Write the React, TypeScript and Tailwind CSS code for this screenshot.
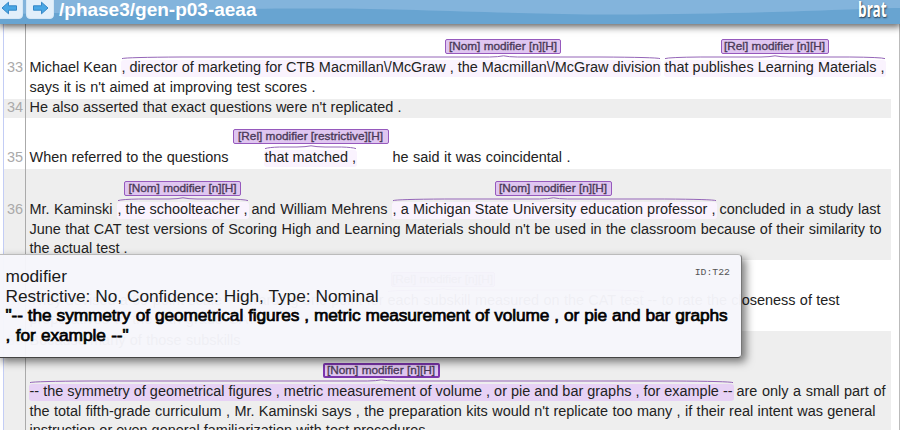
import { clsx } from 'clsx';

type Seg = {
  text: string;
  width: number;
  gap?: number;
  tone?: 'soft' | 'strong';
  label?: string;
  labelX?: number;
  labelWidth?: number;
};

type Sentence = {
  no: string;
  row: string;
  lines: Seg[][];
};

const sentences: Sentence[] = [
  {
    no: '33',
    row: 'h-[74.5px] pt-[34.2px] bg-white',
    lines: [
      [
        { text: 'Michael Kean', width: 87 },
        { text: ', director of marketing for CTB Macmillan\\/McGraw , the Macmillan\\/McGraw division', width: 538, gap: 5, tone: 'soft', label: '[Nom] modifier [n][H]', labelX: 323.5, labelWidth: 116 },
        { text: 'that publishes Learning Materials ,', width: 220, gap: 5, tone: 'soft', label: '[Rel] modifier [n][H]', labelX: 56, labelWidth: 108 },
      ],
      [{ text: "says it is n't aimed at improving test scores .", width: 286 }],
    ],
  },
  {
    no: '34',
    row: 'h-[19.5px] bg-[#eee] leading-[17px]',
    lines: [[{ text: "He also asserted that exact questions were n't replicated .", width: 372 }]],
  },
  {
    no: '35',
    row: 'h-[51px] pt-[30.3px] bg-white',
    lines: [
      [
        { text: 'When referred to the questions', width: 199 },
        { text: 'that matched ,', width: 91, gap: 36, tone: 'soft', label: '[Rel] modifier [restrictive][H]', labelX: -32, labelWidth: 156 },
        { text: 'he said it was coincidental .', width: 178, gap: 37 },
      ],
    ],
  },
  {
    no: '36',
    row: 'h-[90.5px] pt-[31px] bg-[#eee]',
    lines: [
      [
        { text: 'Mr. Kaminski', width: 83 },
        { text: ', the schoolteacher ,', width: 130, gap: 5, tone: 'soft', label: '[Nom] modifier [n][H]', labelX: 6.5, labelWidth: 117 },
        { text: 'and William Mehrens', width: 136, gap: 4 },
        { text: ', a Michigan State University education professor ,', width: 323, gap: 5, tone: 'soft', label: '[Nom] modifier [n][H]', labelX: 102, labelWidth: 117 },
        { text: 'concluded in a study last', width: 161, gap: 4 },
      ],
      [{ text: "June that CAT test versions of Scoring High and Learning Materials should n't be used in the classroom because of their similarity to", width: 852 }],
      [{ text: 'the actual test .', width: 98 }],
    ],
  },
  {
    no: '37',
    row: 'h-[71.5px] pt-[31px] bg-white',
    lines: [
      [
        { text: 'They devised a 69-point scale -- awarding one point for', width: 354 },
        { text: 'each subskill measured on the CAT test', width: 256, gap: 4, tone: 'soft', label: '[Rel] modifier [n][H]', labelX: 3, labelWidth: 104 },
        { text: '-- to rate the closeness of test', width: 192, gap: 4 },
      ],
      [{ text: 'preparatives to the fifth-grade CAT .', width: 236 }],
    ],
  },
  {
    no: '38',
    row: 'h-[120px] bg-[#eee]',
    lines: [
      [{ text: 'Because many of those subskills', width: 211 }],
      [
        { text: '-- the symmetry of geometrical figures , metric measurement of volume , or pie and bar graphs , for example --', width: 703, tone: 'strong', label: '[Nom] modifier [n][H]', labelX: 293, labelWidth: 117 },
        { text: 'are only a small part of', width: 149, gap: 4 },
      ],
      [{ text: "the total fifth-grade curriculum , Mr. Kaminski says , the preparation kits would n't replicate too many , if their real intent was general", width: 846 }],
      [{ text: 'instruction or even general familiarization with test procedures .', width: 404 }],
    ],
  },
];

// curly brace lying over a span, peak under the middle of its label
const Brace = ({ width, peak }: { width: number; peak: number }) => {
  const end = Math.min(width * 0.16, 60);
  return (
    <svg className="absolute left-0 -top-[4px] overflow-visible" width={width} height={5} fill="none" stroke="#9566b8" strokeWidth={1}>
      <path d={`M0 4.6 Q4 3.3 ${end} 3 H${peak - 14} Q${peak - 5} 2.9 ${peak} 1.8 Q${peak + 5} 2.9 ${peak + 14} 3 H${width - end} Q${width - 4} 3.3 ${width} 4.6`} />
    </svg>
  );
};

const Span = ({ seg }: { seg: Seg }) => {
  const { text, width, gap = 0, tone, label, labelX = 0, labelWidth = 0 } = seg;
  return (
    <div className="relative shrink-0 whitespace-nowrap" style={{ width, marginLeft: gap }}>
      {tone && (
        <div className={clsx('absolute -inset-x-px top-[2px] bottom-[1px] rounded-[3px]', tone === 'strong' ? 'bg-[#e7d2f5]' : 'bg-[#faf3fe]')} />
      )}
      <div className="relative [text-align-last:justify]">{text}</div>
      {label && (
        <>
          <Brace width={width} peak={labelX + labelWidth / 2} />
          <div
            className={clsx(
              'absolute -top-[19px] flex h-[15px] items-center justify-center rounded-[2px] bg-[#dfc6f0] pt-px text-[11.8px] leading-none text-[#4a3a57] [-webkit-text-stroke:0.35px_#4a3a57]',
              tone === 'strong' ? 'border-2 border-[#7c35ad]' : 'border border-[#9659bd]',
            )}
            style={{ left: labelX, width: labelWidth }}
          >
            {label}
          </div>
        </>
      )}
    </div>
  );
};

const Row = ({ sentence }: { sentence: Sentence }) => (
  <div className={clsx('relative mr-[8px] flex shrink-0', sentence.row)}>
    <div className="w-[22px] shrink-0 pr-[3px] text-right text-[#aaa]">{sentence.no}</div>
    <div className="pl-[3.5px]">
      {sentence.lines.map((line, i) => (
        <div key={i} className={clsx('flex h-[19.67px]', sentence.no === '38' && i === 1 && 'mt-[31.5px]')}>
          {line.map((seg) => (
            <Span key={seg.text} seg={seg} />
          ))}
        </div>
      ))}
    </div>
  </div>
);

const NavButton = ({ flip }: { flip?: boolean }) => (
  <div className={clsx('flex h-[23px] w-[28px] shrink-0 items-center justify-center rounded-[4px] border border-[#d4e7f6] bg-[#e2effa]', !flip && '-ml-[5px]')}>
    <svg width="17" height="14" viewBox="0 0 17 14" className={clsx(flip && 'rotate-180')}>
      <path d="M1 7 L7.5 1.2 V4.8 H15.5 V9.2 H7.5 V12.8 Z" fill="#49a7e5" stroke="#3587c6" strokeWidth="1" strokeLinejoin="round" />
    </svg>
  </div>
);

const Header = () => (
  <header className="relative z-10 flex h-6 shrink-0 items-start bg-[#68a4d1] shadow-[0_2px_7px_1px_rgba(0,0,0,0.6)]">
    <svg className="absolute inset-0" width="900" height="24" viewBox="0 0 900 24">
      <path d="M0 0 H900 V8 C840 9 740 15 600 14.5 C480 13 420 9 320 8.5 C200 8 130 12 0 14 Z" fill="#83b4dc" />
    </svg>
    <div className="relative -mt-[4px] flex gap-[3px]">
      <NavButton />
      <NavButton flip />
    </div>
    <h1 className="relative ml-[5px] text-[19px] leading-[20px] font-bold whitespace-nowrap text-white">/phase3/gen-p03-aeaa</h1>
    <div className="relative mr-[11px] ml-auto -mt-[3px] w-[31px] font-['Noto_Sans',sans-serif] text-[21px] leading-[25px] font-bold text-white [text-shadow:1px_1px_2px_#234]">
      <span className="inline-block origin-left scale-x-[.65]">brat</span>
    </div>
  </header>
);

const Popup = () => (
  <div className="absolute top-[254px] -left-1 z-20 h-[103.5px] w-[746px] rounded-[4px] border border-t-[#bbb] border-r-[#777] border-b-[#444] bg-[#f6f6fb]/97 pt-[11.6px] pl-[8.5px] text-[17.3px] leading-[19.9px] text-[#1a1a1a] shadow-[4px_4px_8px_rgba(0,0,0,0.5)]">
    <div className="absolute top-[12px] right-[11px] font-['Liberation_Mono',monospace] text-[9.8px] leading-[12px] text-[#555]">ID:T22</div>
    <div className="whitespace-nowrap">modifier</div>
    <div className="w-[373px] whitespace-nowrap tracking-[-0.05px] [text-align-last:justify]">Restrictive: No, Confidence: High, Type: Nominal</div>
    <div className="w-[722px] whitespace-nowrap tracking-[-0.1px] text-black [-webkit-text-stroke:0.7px_black] [text-align-last:justify]">"-- the symmetry of geometrical figures , metric measurement of volume , or pie and bar graphs</div>
    <div className="w-[123px] whitespace-nowrap tracking-[-0.1px] text-black [-webkit-text-stroke:0.7px_black] [text-align-last:justify]">, for example --"</div>
  </div>
);

export default function App() {
  return (
    <div className="h-[430px] w-[905px] bg-white">
      <div className="relative flex h-[430px] w-[900px] flex-col overflow-hidden bg-white font-['Liberation_Sans',Arial,sans-serif] text-[14.45px] leading-[19.67px] text-[#222]">
        <Header />
        <main className="relative ml-[3px] flex flex-col border-r border-l border-r-[#bbb] border-l-[#c3cdf5]">
          {sentences.map((sentence) => (
            <Row key={sentence.no} sentence={sentence} />
          ))}
          <div className="absolute inset-y-0 left-[21px] w-px bg-[#aaa]" />
        </main>
        <Popup />
      </div>
    </div>
  );
}
